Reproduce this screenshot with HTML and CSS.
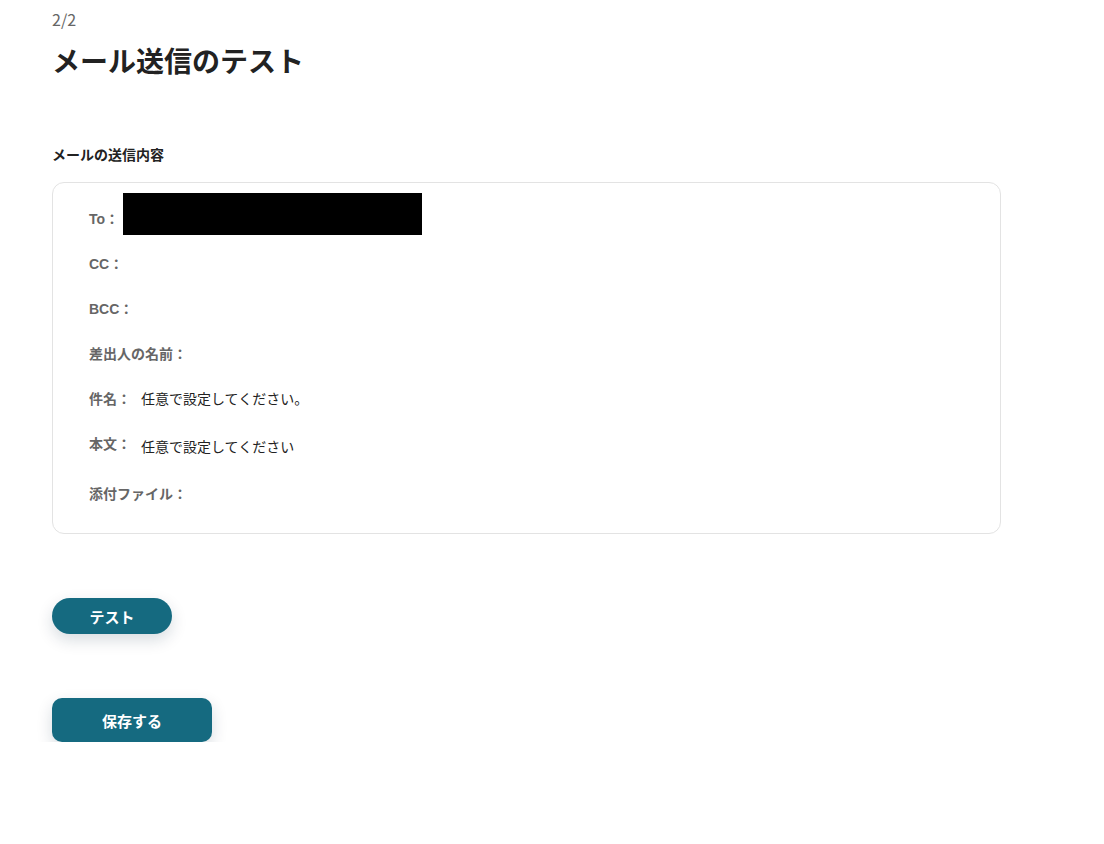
FILE: index.html
```html
<!DOCTYPE html>
<html lang="ja">
<head>
<meta charset="utf-8">
<title>メール送信のテスト</title>
<link rel="stylesheet" href="styles.css">
</head>
<body>
<main class="page">
  <div class="step">2/2</div>
  <h1 class="title">メール送信のテスト</h1>

  <h2 class="section-label">メールの送信内容</h2>
  <div class="card">
    <div class="row row-to">
      <span class="label">To：</span>
      <span class="redact"></span>
    </div>
    <div class="row"><span class="label">CC：</span></div>
    <div class="row"><span class="label">BCC：</span></div>
    <div class="row"><span class="label">差出人の名前：</span></div>
    <div class="row"><span class="label">件名：</span><span class="value">任意で設定してください。</span></div>
    <div class="row row-body"><span class="label">本文：</span><span class="value value-body">任意で設定してください</span></div>
    <div class="row"><span class="label">添付ファイル：</span></div>
  </div>

  <div class="actions">
    <button class="btn btn-test" type="button">テスト</button>
    <button class="btn btn-save" type="button">保存する</button>
  </div>
</main>
</body>
</html>
```

FILE: styles.css
```css
* { box-sizing: border-box; }
html, body { margin: 0; padding: 0; background: #fff; }
body {
  font-family: "Liberation Sans", "Noto Sans CJK JP", sans-serif;
  color: #222;
}
.page {
  padding: 9px 0 0 52px;
  width: 1001px;
}
.step {
  font-family: "Noto Sans CJK JP", sans-serif;
  font-size: 16px;
  line-height: 20px;
  color: #666;
}
.title {
  margin: 17px 0 0;
  font-size: 28px;
  line-height: 34px;
  font-weight: 700;
  color: #222;
}
.section-label {
  margin: 65px 0 0;
  font-size: 14px;
  line-height: 20px;
  font-weight: 700;
  color: #222;
}
.card {
  margin-top: 17px;
  border: 1px solid #e3e3e3;
  border-radius: 12px;
  padding: 10px 36px 28px;
  height: 352px;
}
.row {
  display: flex;
  align-items: flex-start;
  margin-top: 25px;
  font-size: 14px;
  line-height: 20px;
}
.row-to { margin-top: 0; height: 42px; }
.row-to + .row { margin-top: 19px; }
.row-to .label { margin-top: 16px; margin-right: 0; }
.redact {
  display: block;
  width: 299px;
  height: 42px;
  background: #000;
  margin-left: 4px;
}
.label {
  font-weight: 700;
  color: #666;
  margin-right: 10px;
  white-space: nowrap;
}
.value {
  color: #222;
  font-weight: 400;
}
.row-body { height: 25px; }
.value-body { padding-top: 3px; }
.actions {
  display: flex;
  flex-direction: column;
  align-items: flex-start;
  margin-top: 64px;
}
.btn {
  border: none;
  background: #156a80;
  color: #fff;
  font-family: "Noto Sans CJK JP", sans-serif;
  font-weight: 700;
  font-size: 15px;
  cursor: pointer;
  box-shadow: 0 6px 16px rgba(0, 40, 60, 0.16);
}
.btn-test {
  width: 120px;
  height: 36px;
  border-radius: 18px;
}
.btn-save {
  margin-top: 64px;
  width: 160px;
  height: 44px;
  border-radius: 10px;
}
```
